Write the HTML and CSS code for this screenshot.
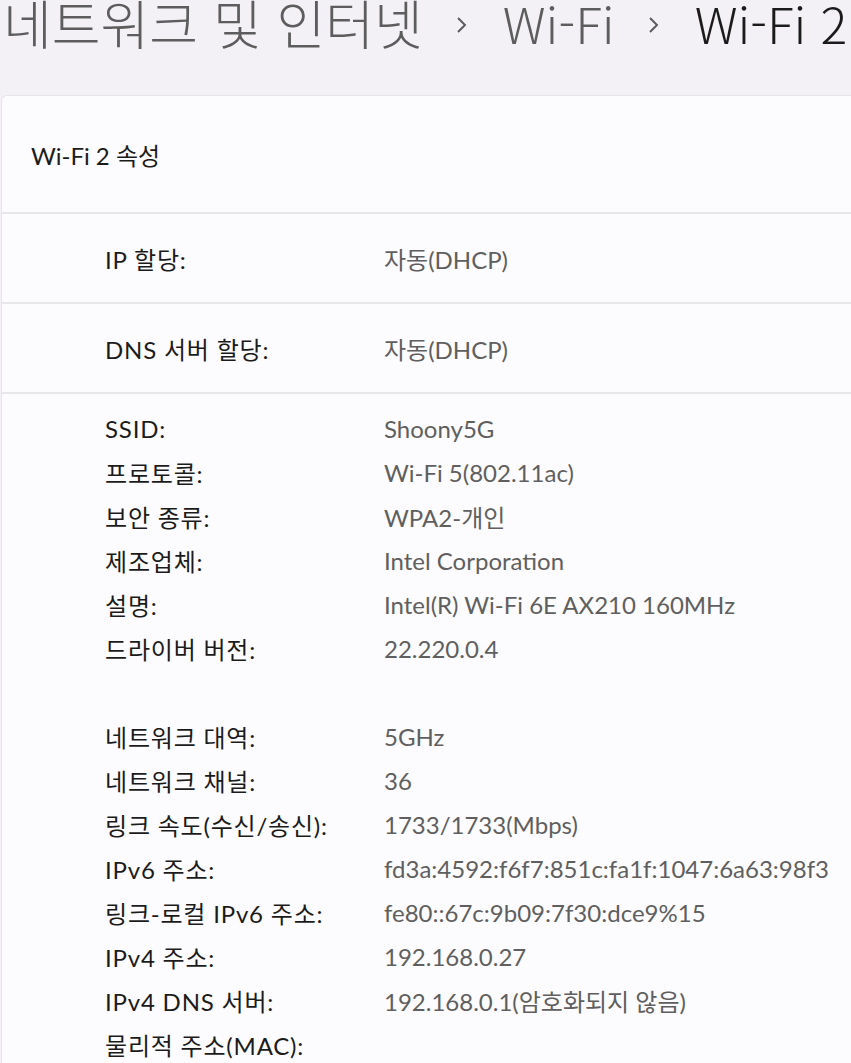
FILE: index.html
```html
<!DOCTYPE html>
<html lang="ko">
<head>
    <meta charset="UTF-8">
    <title>Wi-Fi 2</title>
    <link rel="stylesheet" href="styles.css">
</head>
<body>
    <h1 class="breadcrumb">
        <span class="crumb hangul">네트워크 및 인터넷</span>
        <svg class="sep" width="12" height="18" viewBox="0 0 12 18"><polyline points="2,2 9,9 2,16" fill="none" stroke="#5d5d5d" stroke-width="2"/></svg>
        <span class="crumb">Wi-Fi</span>
        <svg class="sep" width="12" height="18" viewBox="0 0 12 18"><polyline points="2,2 9,9 2,16" fill="none" stroke="#5d5d5d" stroke-width="2"/></svg>
        <span class="crumb current">Wi-Fi 2</span>
    </h1>

    <div class="card">
        <div class="card-header">Wi-Fi 2 속성</div>

        <div class="row">
            <span class="label">IP 할당:</span>
            <span class="value">자동(DHCP)</span>
        </div>

        <div class="row">
            <span class="label">DNS 서버 할당:</span>
            <span class="value">자동(DHCP)</span>
        </div>

        <div class="props">
            <span class="label">SSID:</span>
            <span class="value">Shoony5G</span>
            <span class="label">프로토콜:</span>
            <span class="value">Wi-Fi 5(802.11ac)</span>
            <span class="label">보안 종류:</span>
            <span class="value">WPA2-개인</span>
            <span class="label">제조업체:</span>
            <span class="value">Intel Corporation</span>
            <span class="label">설명:</span>
            <span class="value">Intel(R) Wi-Fi 6E AX210 160MHz</span>
            <span class="label">드라이버 버전:</span>
            <span class="value">22.220.0.4</span>

            <span class="spacer"></span>

            <span class="label">네트워크 대역:</span>
            <span class="value">5GHz</span>
            <span class="label">네트워크 채널:</span>
            <span class="value">36</span>
            <span class="label">링크 속도(수신/송신):</span>
            <span class="value">1733/1733(Mbps)</span>
            <span class="label">IPv6 주소:</span>
            <span class="value">fd3a:4592:f6f7:851c:fa1f:1047:6a63:98f3</span>
            <span class="label">링크-로컬 IPv6 주소:</span>
            <span class="value">fe80::67c:9b09:7f30:dce9%15</span>
            <span class="label">IPv4 주소:</span>
            <span class="value">192.168.0.27</span>
            <span class="label">IPv4 DNS 서버:</span>
            <span class="value">192.168.0.1(암호화되지 않음)</span>
            <span class="label">물리적 주소(MAC):</span>
            <span class="value"></span>
        </div>
    </div>
</body>
</html>
```

FILE: styles.css
```css
html, body {
    overflow: hidden;
}

body {
    font-family: Lato, "Noto Sans CJK KR", sans-serif;
    margin: 0;
    padding: 0 0 0 1px;
    background-color: #f3f1f6;
    color: #1b1b1b;
}

.breadcrumb {
    margin: -3px 0 0 0;
    padding: 0 0 0 2px;
    height: 98px;
    font-family: "Noto Sans CJK KR", sans-serif;
    font-size: 50px;
    font-weight: 300;
    line-height: 50px;
    white-space: nowrap;
    color: #5d5d5d;
    display: flex;
    align-items: flex-start;
    gap: 33px;
}

.breadcrumb .hangul {
    font-size: 53px;
}

.breadcrumb .sep {
    margin-top: 19px;
}

.breadcrumb .sep + .crumb {
    margin-left: 2px;
}

.breadcrumb .current {
    margin-left: -3px;
    color: #1b1b1b;
}

.card {
    width: 900px;
    background-color: #fcfbfd;
    border: 1px solid #e6e4e9;
    border-right: none;
    border-radius: 6px 0 0 6px;
}

.card-header {
    height: 116px;
    padding-left: 29px;
    display: flex;
    align-items: center;
    font-size: 24px;
    border-bottom: 2px solid #e8e6eb;
}

.row {
    height: 88px;
    display: grid;
    grid-template-columns: 279px 1fr;
    align-items: center;
    padding-left: 103px;
    border-bottom: 2px solid #e8e6eb;
}

.props {
    display: grid;
    grid-template-columns: 279px 1fr;
    grid-auto-rows: 44px;
    align-items: center;
    padding: 12px 0 20px 103px;
}

.spacer {
    grid-column: 1 / 3;
}

.label,
.value {
    font-size: 24px;
    white-space: nowrap;
}

.label {
    letter-spacing: 0.8px;
}

.value {
    color: #5f5f5f;
}
```
